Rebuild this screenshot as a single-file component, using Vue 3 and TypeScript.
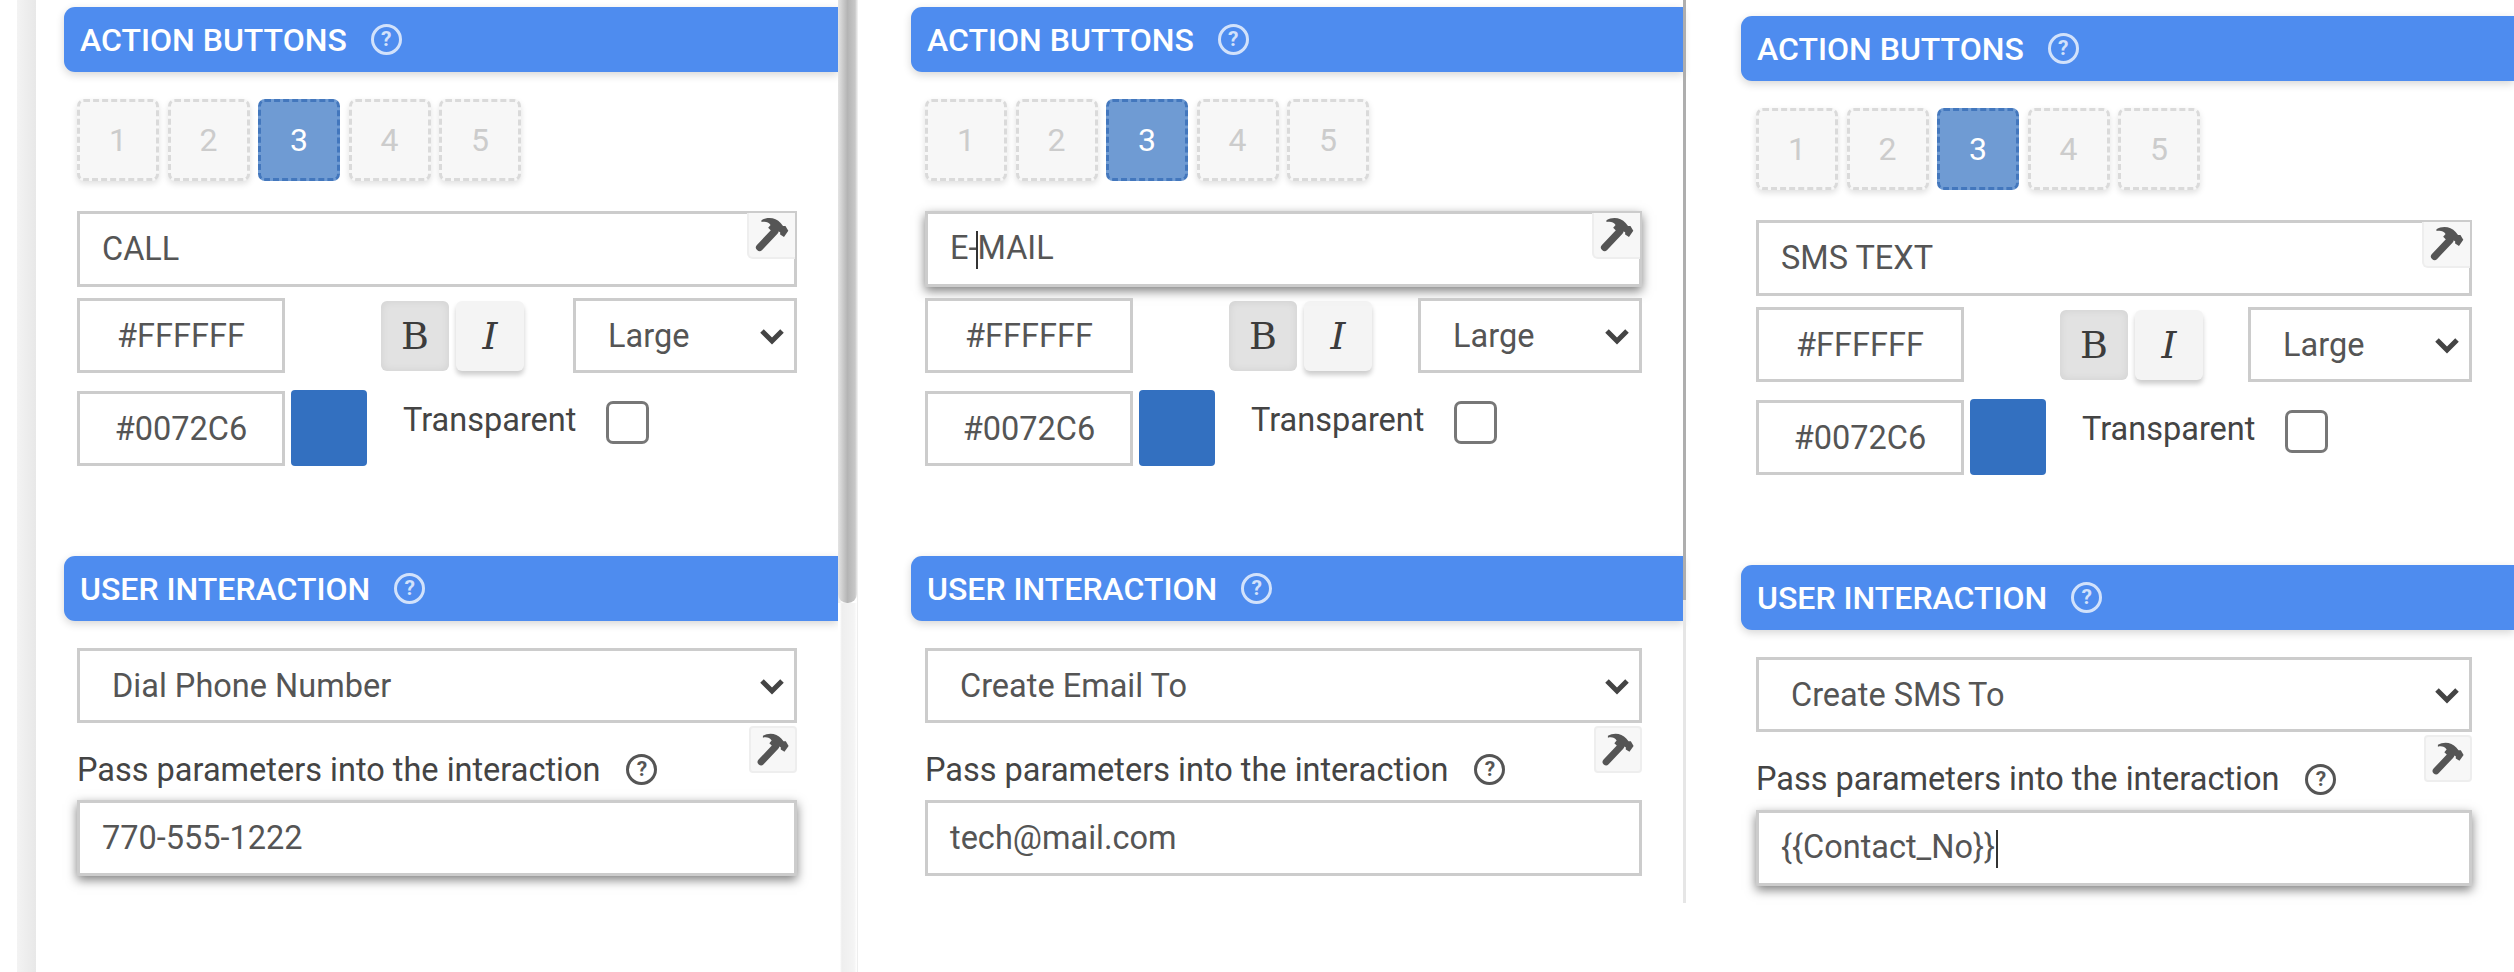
<script setup lang="ts">
interface Panel {
  id: string
  label: string
  labelCaret: number
  action: string
  param: string
  paramFocus: boolean
}

const panels: Panel[] = [
  { id: 'p1', label: 'CALL', labelCaret: -1, action: 'Dial Phone Number', param: '770-555-1222', paramFocus: true },
  { id: 'p2', label: 'E-MAIL', labelCaret: 2, action: 'Create Email To', param: 'tech@mail.com', paramFocus: false },
  { id: 'p3', label: 'SMS TEXT', labelCaret: -1, action: 'Create SMS To', param: '{{Contact_No}}', paramFocus: true },
]
const slots = [1, 2, 3, 4, 5]
const handleD =
  'M13 7.5C19 4 28 4.5 33 10.5L35.5 13.5L38 13.5L41 18.5L36.5 25L32.5 22.5L32.5 20L29.5 18.5L26.5 22L20 15.5L22.5 12.5C20.5 9.5 17 8.5 13 9.5Z'
</script>

<template>
  <div class="page">
    <section v-for="p in panels" :key="p.id" class="panel" :class="p.id">
      <div class="content">
        <h2 class="head"><span>ACTION BUTTONS</span><span class="help light">?</span></h2>
        <div class="body">
          <div class="slots">
            <div v-for="n in slots" :key="n" class="slot" :class="{ on: n === 3 }">{{ n }}</div>
          </div>

          <div class="field label-field" :class="{ focus: p.labelCaret >= 0 }">
            <span v-if="p.labelCaret >= 0">{{ p.label.slice(0, p.labelCaret) }}<span class="caret"></span>{{ p.label.slice(p.labelCaret) }}</span>
            <span v-else>{{ p.label }}</span>
            <button class="hammer corner" type="button" aria-label="Bind">
              <svg viewBox="0 0 48 46" width="48" height="46">
                <path d="M11 36L27 19" stroke="#555" stroke-width="7.5" stroke-linecap="round" fill="none" />
                <path :d="handleD" fill="#555" />
              </svg>
            </button>
          </div>

          <div class="row row-a">
            <div class="field hex">#FFFFFF</div>
            <div class="swatch white"></div>
            <div class="toggles">
              <button class="tog b" type="button">B</button>
              <button class="tog i" type="button">I</button>
            </div>
            <div class="select-wrap size">
              <select class="select"><option>Large</option></select>
              <svg class="chev" viewBox="0 0 26 18" width="26" height="18"><path d="M3 4L13 14L23 4" stroke="#444" stroke-width="5" fill="none" /></svg>
            </div>
          </div>

          <div class="row row-b">
            <div class="field hex">#0072C6</div>
            <div class="swatch blue"></div>
            <span class="trans">Transparent</span>
            <span class="check"></span>
          </div>
        </div>

        <h2 class="head second"><span>USER INTERACTION</span><span class="help light">?</span></h2>
        <div class="body">
          <div class="select-wrap action">
            <select class="select"><option>{{ p.action }}</option></select>
            <svg class="chev" viewBox="0 0 26 18" width="26" height="18"><path d="M3 4L13 14L23 4" stroke="#444" stroke-width="5" fill="none" /></svg>
          </div>
          <div class="param-label">
            <span>Pass parameters into the interaction</span><span class="help dark">?</span>
            <button class="hammer below" type="button" aria-label="Bind">
              <svg viewBox="0 0 48 46" width="48" height="46">
                <path d="M11 36L27 19" stroke="#555" stroke-width="7.5" stroke-linecap="round" fill="none" />
                <path :d="handleD" fill="#555" />
              </svg>
            </button>
          </div>
          <div class="field" :class="{ focus: p.paramFocus }">
            <span>{{ p.param }}<span v-if="p.id === 'p3'" class="caret end"></span></span>
          </div>
        </div>
      </div>
      <div v-if="p.id !== 'p3'" class="bar">
        <div class="thumb"></div>
        <div class="track"></div>
      </div>
    </section>
  </div>
</template>

<style>
html, body { background: #fff; }
</style>

<style scoped>
.page {
  display: flex;
  width: 2514px;
  height: 972px;
  overflow: hidden;
  background: #fff;
  font-family: Roboto, "Liberation Sans", sans-serif;
  color: #555;
}
.panel {
  display: flex;
  align-items: stretch;
  height: 972px;
  box-sizing: border-box;
}
.p1 {
  width: 857px;
  padding-left: 64px;
  background: linear-gradient(90deg, #fff 17px, #f3f3f3 17px, #e8e8e8 36px, #fff 36px);
}
.p2 {
  width: 829px;
  padding-left: 53px;
  border-left: 1px solid #eee;
}
.p3 {
  width: 828px;
  padding-left: 55px;
  padding-top: 9px;
}
.content {
  flex: 1;
  min-width: 0;
  padding-top: 7px;
}
.head {
  display: flex;
  align-items: center;
  gap: 24px;
  height: 65px;
  margin: 0;
  padding-left: 16px;
  background: #4e8cef;
  border-radius: 11px 0 0 11px;
  box-shadow: 0 3px 8px rgba(0, 0, 0, 0.16);
  color: #fff;
  font-size: 32px;
  font-weight: 500;
  white-space: nowrap;
}
.second { margin-top: 90px; }
.help {
  display: inline-flex;
  align-items: center;
  justify-content: center;
  box-sizing: border-box;
  width: 31px;
  height: 31px;
  border-radius: 50%;
  font-size: 21px;
  font-weight: 700;
  line-height: 1;
}
.help.light { border: 3px solid rgba(255, 255, 255, 0.75); color: rgba(255, 255, 255, 0.75); }
.help.dark { border: 3px solid #555; color: #555; margin-left: 26px; }
.body {
  margin-left: 13px;
  width: 720px;
}
.p2 .body { width: 717px; margin-left: 14px; }
.p3 .body { width: 716px; margin-left: 15px; }
.slots {
  display: flex;
  gap: 8.5px;
  padding-top: 27px;
  margin-bottom: 30px;
}
.slot {
  display: flex;
  align-items: center;
  justify-content: center;
  box-sizing: border-box;
  width: 82px;
  height: 82px;
  background: #f7f7f7;
  border: 3px dashed #dadada;
  border-radius: 7px;
  box-shadow: 0 3px 6px rgba(0, 0, 0, 0.12);
  color: #ccc;
  font-size: 32px;
}
.slot.on {
  background: #6f9bd3;
  border-color: #4377bd;
  color: #fff;
  box-shadow: none;
}
.field {
  position: relative;
  display: flex;
  align-items: center;
  box-sizing: border-box;
  height: 76px;
  padding-left: 22px;
  background: #fff;
  border: 3px solid #ccc;
  font-size: 32.5px;
  white-space: pre;
}
.field.focus {
  box-shadow: 0 4px 10px rgba(0, 0, 0, 0.5);
}
.caret {
  display: inline-block;
  width: 2px;
  height: 38px;
  margin: 0 -1px;
  vertical-align: middle;
  background: #333;
}
.caret.end { margin: 0 0 0 1px; }
.hammer {
  position: absolute;
  right: 0;
  width: 48px;
  height: 46px;
  padding: 0;
  background: #f7f7f7;
  border: 2px solid #eee;
  border-radius: 0 0 0 6px;
  display: flex;
  align-items: center;
  justify-content: center;
}
.hammer.corner { top: -1px; right: -1px; border-top: 0; border-right: 0; }
.hammer.below { top: 3px; border-radius: 4px; height: 47px; }
.row {
  display: flex;
  margin-top: 11px;
}
.row-b {
  margin-top: 18px;
  align-items: flex-start;
}
.hex {
  width: 208px;
  height: 75px;
  padding: 0;
  justify-content: center;
}
.swatch {
  width: 76px;
  height: 75px;
  margin-left: 6px;
  border-radius: 4px;
}
.swatch.white { background: #fff; }
.swatch.blue { background: #3370c0; height: 76px; margin-top: -1px; }
.toggles {
  display: flex;
  gap: 7px;
  height: 70px;
  margin: 3px 0 0 14px;
}
.tog {
  width: 68px;
  height: 70px;
  padding: 0;
  border: 0;
  border-radius: 6px;
  font-family: "DejaVu Serif", "Liberation Serif", serif;
  font-size: 38px;
  color: #3c3c3c;
}
.tog.b {
  background: #e2e2e2;
  box-shadow: inset 0 0 8px rgba(0, 0, 0, 0.08);
}
.tog.i {
  background: #f4f4f4;
  font-style: italic;
  box-shadow: 0 4px 5px rgba(0, 0, 0, 0.2);
}
.select-wrap {
  position: relative;
  box-sizing: border-box;
}
.size {
  width: 224px;
  height: 75px;
  margin-left: auto;
}
.action {
  height: 75px;
  margin-top: 27px;
}
.select {
  appearance: none;
  width: 100%;
  height: 100%;
  box-sizing: border-box;
  padding: 0 0 0 32px;
  background: #fff;
  border: 3px solid #ccc;
  border-radius: 0;
  color: #555;
  font-family: inherit;
  font-size: 32.5px;
}
.chev {
  position: absolute;
  right: 12px;
  top: 29px;
}
.trans {
  margin: 10px 0 0 36px;
  color: #444;
  font-size: 32.5px;
  line-height: 38px;
}
.check {
  box-sizing: border-box;
  width: 43px;
  height: 43px;
  margin: 10px 0 0 30px;
  border: 3px solid #777;
  border-radius: 7px;
}
.param-label {
  position: relative;
  display: flex;
  align-items: center;
  box-sizing: border-box;
  height: 77px;
  padding: 16px 0 0;
  color: #444;
  font-size: 32.5px;
  white-space: nowrap;
}
.p3 .param-label { height: 78px; }
.bar {
  display: flex;
  flex-direction: column;
}
.p1 .bar { width: 19px; }
.p1 .thumb {
  height: 603px;
  border-radius: 0 0 9px 9px;
  background: linear-gradient(90deg, #e4e4e4, #b4b4b4 50%, #c8c8c8 90%, #e8e8e8);
}
.p1 .track {
  flex: 1;
  background: linear-gradient(90deg, #fff 10%, #eee 20%, #f4f4f4 85%, #fff);
}
.p2 .bar { width: 3px; height: 903px; }
.p2 .thumb { height: 600px; background: #aeaeae; }
.p2 .track { flex: 1; background: #e6e6e6; }
</style>
